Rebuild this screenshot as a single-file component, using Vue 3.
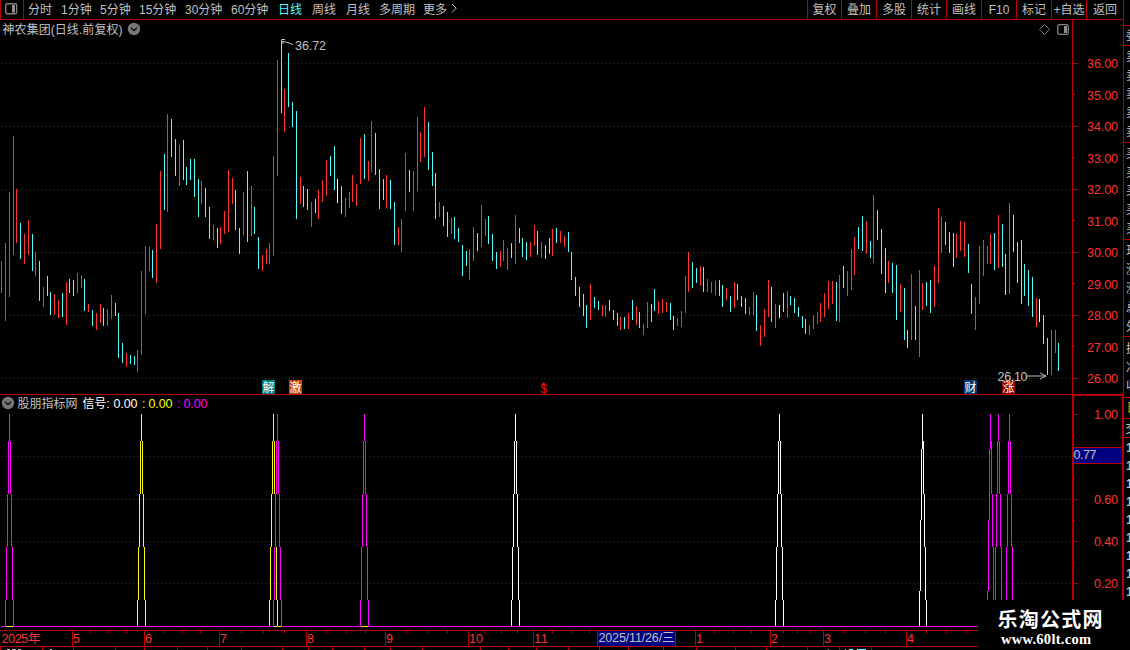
<script setup>
const periods = ['分时', '1分钟', '5分钟', '15分钟', '30分钟', '60分钟', '日线', '周线', '月线', '多周期', '更多']
const tools = ['复权', '叠加', '多股', '统计', '画线', 'F10', '标记', '+自选', '返回']

// Each bar: x, high y, low y, colour key (R up, C down, W unchanged)
const raw = `1 261 293 R|5 243 321 R|9 192 297 R|13 136 255 R|16 189 243 R|20 223 259 C|24 234 264 R|28 220 255 R|32 234 271 C|35 252 276 R|39 261 301 C|43 287 307 R|47 276 296 C|50 292 315 C|54 294 315 R|58 300 318 R|62 293 317 C|66 282 325 R|69 279 293 C|73 280 296 C|77 273 293 R|81 275 288 R|84 279 311 C|88 304 312 R|92 310 326 C|96 313 330 R|100 304 323 R|103 308 326 C|107 309 326 R|111 295 319 R|115 303 316 C|118 313 358 C|122 343 363 C|126 353 367 R|130 355 364 C|134 356 365 C|137 350 372 R|141 271 355 R|145 246 314 R|149 247 271 R|152 250 278 C|156 224 283 R|160 171 249 R|164 154 210 C|167 114 212 R|171 119 157 C|175 139 176 C|179 145 186 R|183 140 180 C|186 167 185 C|190 159 180 C|194 159 197 C|198 179 217 C|201 181 204 R|205 188 217 C|209 207 239 C|213 225 240 R|217 228 248 C|220 227 244 R|224 211 234 R|228 170 232 R|232 178 204 R|235 190 230 C|239 228 254 C|243 192 235 R|247 171 242 C|251 186 236 R|254 207 234 C|258 237 269 C|262 255 271 R|266 249 264 R|269 243 264 R|273 156 256 R|277 60 176 R|281 40 113 C|284 89 132 R|288 53 107 C|292 102 127 C|296 111 219 C|300 177 204 R|303 186 207 C|307 189 210 C|311 202 227 R|315 199 213 C|318 190 219 R|322 180 202 R|326 160 196 R|330 156 176 C|334 146 190 C|337 179 203 W|341 186 214 C|345 198 217 R|349 192 208 R|352 175 202 R|356 184 206 R|360 138 184 R|364 134 179 C|368 161 181 R|371 121 172 R|375 133 175 C|379 169 209 C|383 179 200 C|386 175 208 R|390 180 209 C|394 202 245 C|398 227 245 R|401 219 252 R|405 153 211 R|409 170 192 C|413 171 211 R|417 117 191 R|420 132 162 R|424 107 157 R|428 122 170 C|432 152 186 C|435 173 219 C|439 202 217 R|443 206 226 C|447 212 237 C|451 218 234 R|454 217 239 C|458 228 242 C|462 245 276 C|466 251 266 C|469 249 280 R|473 227 261 R|477 233 251 C|481 205 247 R|485 219 236 R|488 216 244 C|492 234 261 C|496 252 269 C|500 251 267 R|503 240 261 R|507 248 270 R|511 243 258 C|515 215 264 R|519 228 243 C|522 238 257 C|526 242 260 C|530 242 257 R|534 225 246 R|537 231 255 C|541 242 258 R|545 245 259 C|549 238 254 C|552 229 256 R|556 228 243 C|560 231 243 R|564 236 247 R|568 232 252 C|571 252 280 C|575 277 296 C|579 287 307 C|583 294 316 C|586 305 328 C|590 284 320 R|594 297 308 C|598 301 310 C|602 305 316 R|605 305 317 R|609 300 311 C|613 310 320 C|617 313 326 C|620 317 330 R|624 317 329 C|628 313 329 R|632 300 320 C|636 306 325 R|639 312 328 C|643 324 335 R|647 302 328 R|651 304 322 C|654 289 311 C|658 301 314 R|662 299 313 R|666 302 312 R|670 303 320 C|673 316 330 C|677 318 326 R|681 311 327 R|685 276 313 R|688 252 292 R|692 262 288 C|696 268 283 C|700 266 286 R|703 267 292 C|707 279 292 R|711 282 293 R|715 281 295 R|719 280 296 C|722 285 307 C|726 288 300 R|730 296 312 C|734 282 308 R|737 284 300 C|741 296 307 C|745 298 314 C|749 307 315 R|753 292 315 R|756 295 331 C|760 325 346 R|764 309 337 R|768 280 317 R|771 287 322 C|775 304 328 R|779 305 318 W|783 293 312 C|787 291 318 R|790 296 305 C|794 298 313 C|798 307 317 C|802 316 328 C|805 319 334 C|809 325 335 R|813 315 329 R|817 312 324 R|820 303 322 R|824 293 317 R|828 281 309 R|832 281 304 R|836 282 321 C|839 275 322 R|843 266 288 C|847 271 296 R|851 249 290 R|854 237 275 R|858 227 249 C|862 216 251 C|866 221 254 R|870 241 258 C|873 195 263 R|877 210 240 C|881 229 274 C|885 248 293 C|888 261 283 R|892 263 293 C|896 265 320 C|900 284 312 R|904 288 340 C|907 330 348 C|911 274 340 R|915 306 340 C|919 270 357 R|922 283 310 R|926 282 306 C|930 280 313 C|934 266 307 R|938 208 283 R|941 217 253 R|945 222 245 C|949 232 253 C|953 233 267 C|956 234 258 R|960 221 251 R|964 222 257 R|968 244 273 C|971 284 314 C|975 297 330 R|979 246 304 R|983 240 276 R|987 246 264 R|990 234 264 R|994 233 270 C|998 215 268 R|1002 224 267 C|1005 254 295 C|1009 203 294 R|1013 215 252 C|1017 242 283 C|1021 240 304 C|1024 264 296 C|1028 270 306 C|1032 277 317 C|1036 298 327 R|1039 299 322 W|1043 315 344 C|1047 338 375 C|1051 330 375 R|1055 330 353 R|1058 343 371 C`
const bars = raw.split('|').map((s) => {
  const [x, a, b, c] = s.split(' ')
  return { x: +x, y: +a, h: b - a, c }
})

// Signal spikes: apex x, distance to the previous and next bar, colour
const spikes = [
  [141, 4, 4, '#ffff00'], [273, 4, 4, '#ffff00'],
  [9, 4, 4, '#ff00ff'], [277, 4, 4, '#ff00ff'], [364, 4, 4, '#ff00ff'],
  [515, 4, 4, '#ffffff'], [779, 4, 4, '#ffffff'], [922, 3, 4, '#ffffff'],
  [990, 3, 4, '#ff00ff'], [998, 4, 4, '#ff00ff'], [1009, 4, 4, '#ff00ff'],
]
const TOP = 414
const H = 212
const steps = []
for (const [x, l, r, fill] of spikes) {
  for (const [gap, dir] of [[l, -1], [r, 1]]) {
    for (let k = 0; k <= gap; k++) {
      const y0 = Math.round(TOP + Math.max(0, ((k - 0.5) * H) / gap))
      const y1 = Math.round(TOP + Math.min(H, ((k + 0.5) * H) / gap))
      steps.push({ x: x + dir * k, y: y0, h: y1 - y0, fill })
    }
  }
}

const gridRows = [63, 126, 189, 252, 315, 378, 456, 499, 541, 583]
const priceLabels = [36, 35, 34, 33, 32, 31, 30, 29, 28, 27, 26].map((v, i) => ({
  text: v.toFixed(2),
  y: Math.floor(63 + i * 31.5),
  base: Math.floor(63 + i * 31.5) + (i % 2 ? 6 : 5),
  major: i % 2 === 0,
}))
const signalLabels = [['1.00', 414], ['0.60', 499], ['0.40', 541], ['0.20', 583]]
const signalMinor = [435, 478, 520, 562]
const months = [[72, '5'], [144, '6'], [219, '7'], [306, '8'], [385, '9'], [468, '10'], [533, '11'], [695, '1'], [770, '2'], [823, '3'], [906, '4']]
const minor = [90, 108, 126, 163, 182, 200, 241, 263, 284, 326, 346, 365, 406, 427, 447, 484, 501, 517, 552, 571, 589, 714, 733, 751, 783, 797, 810, 844, 865, 885, 926, 946, 966]
const tabTicks = [0, 42, 73, 115, 144, 177, 207, 241, 282, 308, 332, 364, 390, 422, 480, 508, 536, 568, 599, 628, 663, 696, 735, 766, 807, 839, 871]
const badges = [[262, '解', '#008080'], [289, '激', '#c0480c'], [964, '财', '#003a74'], [1002, '涨', '#860000']]
const sideRules = [25, 45, 142, 239, 336, 397, 418, 437]
const sideText = [[40, '委'], [61, '卖'], [80, '卖'], [98, '卖'], [117, '卖'], [136, '卖'], [158, '买'], [177, '买'], [195, '买'], [214, '买'], [233, '买'], [255, '现'], [274, '涨'], [293, '涨'], [312, '总'], [331, '外'], [353, '换'], [372, '净'], [390, '收']]
const sideDigits = [452, 470, 488, 506, 524, 542, 560, 578, 596]
</script>

<template>
  <div class="terminal">
    <header class="bar">
      <div class="panel-toggle">
        <svg width="13" height="12" viewBox="0 0 13 12">
          <rect x="0.75" y="0.75" width="11" height="10" rx="1.5" fill="none" stroke="#858585" stroke-width="1.3" />
          <rect x="7" y="2" width="3" height="7.5" fill="#909090" />
        </svg>
      </div>
      <nav class="periods">
        <span v-for="p in periods" :key="p" :class="{ active: p === '日线' }">{{ p }}</span>
        <svg width="7" height="11" viewBox="0 0 7 11"><path d="M1 1L5.2 5.2L1 9.4" fill="none" stroke="#c0c0c0" /></svg>
      </nav>
      <nav class="tools">
        <span v-for="t in tools" :key="t">{{ t }}</span>
      </nav>
    </header>

    <svg class="chart" width="1130" height="630" viewBox="0 20 1130 630">
      <g shape-rendering="crispEdges">
        <path v-for="y in gridRows" :key="y" :d="`M1 ${y + 0.5}H1072`" stroke="#a80808" stroke-dasharray="1 3" />
        <rect v-for="b in bars" :key="b.x" :x="b.x" :y="b.y" width="1" :height="b.h" :class="'k' + b.c" />

        <rect x="1" y="626" width="977" height="1" fill="#ff00ff" />
        <rect x="6" y="626" width="7" height="1" fill="#ffff00" />
        <rect x="274" y="626" width="3" height="1" fill="#ffffff" />
        <rect x="278" y="626" width="3" height="1" fill="#ffff00" />
        <rect x="361" y="626" width="7" height="1" fill="#ffff00" />
        <rect v-for="(s, i) in steps" :key="'s' + i" :x="s.x" :y="s.y" width="1" :height="s.h" :fill="s.fill" />

        <g fill="#b80000">
          <rect x="0" y="394" width="1123" height="1" />
          <rect x="1072" y="20" width="1" height="375" />
          <rect x="1072" y="395" width="2" height="205" />
          <rect x="1072" y="395" width="51" height="1" />
          <rect x="1123" y="20" width="1" height="580" />
          <rect x="1122" y="395" width="1" height="205" />
          <rect v-for="p in priceLabels" :key="p.text" x="1073" :y="p.y" :width="p.major ? 5 : 2" height="1" />
          <rect v-for="l in signalLabels" :key="l[0]" x="1074" :y="l[1]" width="4" height="1" />
          <rect v-for="y in signalMinor" :key="y" x="1074" :y="y" width="1" height="1" />
          <rect v-for="y in sideRules" :key="'r' + y" x="1124" :y="y" width="6" height="1" />
          <rect x="0" y="630" width="978" height="1" />
          <rect x="0" y="646" width="978" height="1" />
          <rect v-for="m in months" :key="m[1]" :x="m[0]" y="630" width="1" height="16" />
          <rect v-for="x in minor" :key="'n' + x" :x="x" y="631" width="1" height="2" />
          <rect v-for="x in tabTicks" :key="'t' + x" :x="x" y="647" width="1" height="3" />
        </g>

        <rect x="1074" y="447" width="48" height="17" fill="#000080" />
        <path d="M1074 447.5H1122M1074 463.5H1122" stroke="#b80000" />
        <rect x="597" y="630" width="79" height="17" fill="#000080" />
        <rect x="597.5" y="630.5" width="78" height="16" fill="none" stroke="#b80000" />
        <path d="M7 649.5h3m2 0h4m2 0h3M50 649.5h2M828 649.5h1M845 649.5h1" stroke="#c0c0c0" />
        <path d="M849 649.5h4m4 0h9" stroke="#54fcfc" />
        <rect v-for="b in badges" :key="b[1]" :x="b[0]" y="380" width="13" height="14" :fill="b[2]" />
      </g>

      <g class="grey">
        <text x="2.5" y="34" textLength="120">神农集团(日线.前复权)</text>
        <text x="295" y="50" class="num" textLength="31">36.72</text>
        <text x="997.5" y="381" class="num" textLength="30">26.10</text>
        <text x="1073.5" y="459" class="num" textLength="23">0.77</text>
        <text x="598.5" y="642" class="num" textLength="76">2025/11/26/三</text>
        <text x="17.5" y="408" textLength="60">股朋指标网</text>
      </g>
      <g fill="none" stroke="#c0c0c0">
        <path d="M281.5 45V39.5H285M281.5 41.5L286 42L293 44.5M283 41.5V44" />
        <path d="M1027 376H1046M1040 373L1046 376L1040 379" />
      </g>
      <g v-for="c in [[134, 29], [8, 403]]" :key="c[0]">
        <circle :cx="c[0]" :cy="c[1]" r="6.2" fill="#777" />
        <path :d="`M${c[0] - 3} ${c[1] - 1.2}l3 2.8l3 -2.8`" fill="none" stroke="#111" stroke-width="1.4" />
      </g>
      <path d="M1044.5 24.5L1049.5 29.5L1044.5 34.5L1039.5 29.5Z" fill="none" stroke="#777" />
      <rect x="1057.7" y="24.7" width="10.6" height="9.6" rx="1.5" fill="none" stroke="#858585" stroke-width="1.3" />
      <rect x="1064" y="26" width="3" height="7" fill="#909090" />

      <text v-for="b in badges" :key="'b' + b[1]" :x="b[0] + 0.5" y="391.5" class="badge">{{ b[1] }}</text>
      <text x="540.4" y="392.5" class="dividend">$</text>
      <path d="M541 385L543.7 382L546.5 385Z" fill="#ff0000" />

      <text x="82.5" y="408" fill="#fff" textLength="27">信号:</text>
      <text x="113.5" y="408" class="num" fill="#fff" textLength="24">0.00</text>
      <text x="142" y="408" class="num" fill="#ff0">:</text>
      <text x="148.5" y="408" class="num" fill="#ff0" textLength="24">0.00</text>
      <text x="177" y="408" class="num" fill="#f0f">:</text>
      <text x="183.5" y="408" class="num" fill="#f0f" textLength="24">0.00</text>

      <g class="num red">
        <text v-for="p in priceLabels" :key="p.text" x="1087" :y="p.base" textLength="31">{{ p.text }}</text>
        <text v-for="l in signalLabels" :key="l[0]" x="1094" :y="l[1] + 5" textLength="24">{{ l[0] }}</text>
        <text x="1.5" y="643" textLength="39">2025年</text>
        <text v-for="m in months" :key="m[1]" :x="m[0] + 1" y="643" :textLength="m[1].length * 7">{{ m[1] }}</text>
      </g>

      <g class="grey">
        <text v-for="(s, i) in sideText" :key="i" x="1126" :y="s[0]">{{ s[1] }}</text>
        <text x="1125.5" y="433">交</text>
        <text v-for="y in sideDigits" :key="y" x="1126" :y="y" class="num bold">1</text>
      </g>
      <text x="1126.5" y="412" fill="#d0c000">日</text>

      <rect x="978" y="600" width="152" height="50" fill="#000" />
      <text x="997.5" y="626.5" class="brand" textLength="105">乐淘公式网</text>
      <text x="1001" y="644" class="site" textLength="90">www.60lt.com</text>
    </svg>
  </div>
</template>

<style>
html,
body {
  margin: 0;
  background: #000;
  overflow: hidden;
}
</style>

<style scoped>
.terminal {
  width: 1130px;
  height: 650px;
  background: #000;
  overflow: hidden;
  font: 12px 'Liberation Sans', 'Noto Sans CJK SC', sans-serif;
  color: #c0c0c0;
}
.bar {
  box-sizing: border-box;
  display: flex;
  width: 1124px;
  height: 20px;
  border-bottom: 1px solid #b80000;
  line-height: 19px;
  white-space: nowrap;
}
.panel-toggle {
  box-sizing: border-box;
  width: 24px;
  padding: 3px 0 0 4px;
  border: solid #b80000;
  border-width: 0 1px;
}
.panel-toggle svg {
  display: block;
}
.periods {
  display: grid;
  grid-template-columns: 33px 39px 39px 46px 46px 47px 34px 34px 33px 44px 28px 10px;
  padding-left: 4px;
}
.periods svg {
  margin-top: 3px;
}
.active {
  color: #54fcfc;
}
.tools {
  display: grid;
  grid-template-columns: 34px repeat(7, 35px) 37px;
  margin-left: auto;
  border-right: 1px solid #b80000;
}
.tools span {
  height: 19px;
  border-left: 1px solid #b80000;
  text-align: center;
}
.periods span,
.tools span {
  padding-top: 1px;
  box-sizing: border-box;
  height: 19px;
  line-height: 18px;
}
.chart {
  display: block;
}
.chart text {
  font-size: 12px;
}
.grey {
  fill: #c0c0c0;
}
.chart .num,
.chart .num text {
  font-size: 12.5px;
}
.red {
  fill: #ff3232;
}
.kR {
  fill: #ff3232;
}
.kC {
  fill: #54fcfc;
}
.kW {
  fill: #fff;
}
.badge {
  fill: #fff;
}
.dividend {
  fill: #f00;
}
.chart .bold {
  font-weight: bold;
}
.chart .brand {
  font-size: 20px;
  font-weight: bold;
  fill: #fff;
}
.chart .site {
  font: bold 14.5px 'Liberation Serif', serif;
  fill: #fff;
}
</style>
